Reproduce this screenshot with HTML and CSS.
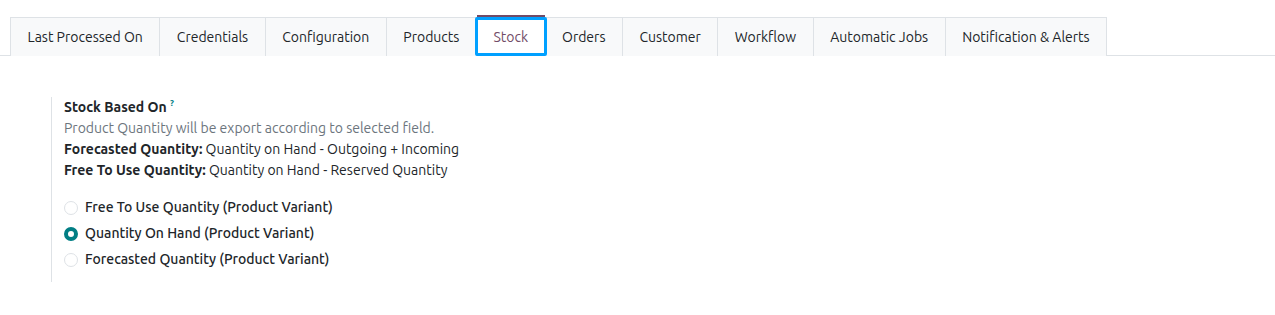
FILE: index.html
```html
<!DOCTYPE html>
<html lang="en">
  <head>
    <meta charset="UTF-8" />
    <meta name="viewport" content="width=device-width, initial-scale=1.0" />
    <title>Stock Settings</title>
    <link rel="stylesheet" href="styles.css">
  </head>
  <body>
    <div class="tabs">
      <a class="tab">Last Processed On</a>
      <a class="tab">Credentials</a>
      <a class="tab">Configuration</a>
      <a class="tab">Products</a>
      <a class="tab active">Stock</a>
      <a class="tab">Orders</a>
      <a class="tab">Customer</a>
      <a class="tab">Workflow</a>
      <a class="tab">Automatic Jobs</a>
      <a class="tab">Notification &amp; Alerts</a>
    </div>

    <div class="panel">
      <div class="setting">
        <div class="label">Stock Based On <sup class="help">?</sup></div>
        <div class="muted">Product Quantity will be export according to selected field.</div>
        <div class="line"><b>Forecasted Quantity:</b> Quantity on Hand - Outgoing + Incoming</div>
        <div class="line"><b>Free To Use Quantity:</b> Quantity on Hand - Reserved Quantity</div>

        <div class="radios">
          <label class="radio"><span class="dot"></span>Free To Use Quantity (Product Variant)</label>
          <label class="radio"><span class="dot checked"></span>Quantity On Hand (Product Variant)</label>
          <label class="radio"><span class="dot"></span>Forecasted Quantity (Product Variant)</label>
        </div>
      </div>
    </div>
  </body>
</html>
```

FILE: styles.css
```css
* {
  box-sizing: border-box;
  margin: 0;
  padding: 0;
}
body {
  font-family: "Ubuntu", "Noto Sans", sans-serif;
  font-size: 14px;
  color: #212529;
  background: #fff;
}
.tabs {
  display: flex;
  margin-top: 17px;
  padding-left: 10px;
  border-bottom: 1px solid #dee2e6;
}
.tab {
  display: flex;
  align-items: center;
  height: 39px;
  padding: 0 16.5px;
  background: #f8f9fa;
  border: 1px solid #dee2e6;
  border-left: none;
  border-bottom: none;
  margin-bottom: -1px;
  color: #212529;
  cursor: pointer;
}
.tab:first-child {
  border-left: 1px solid #dee2e6;
}
.tab.active {
  position: relative;
  background: #fff;
  color: #714b67;
  border-bottom: 1px solid #fff;
}
.tab.active::before {
  content: "";
  position: absolute;
  left: 0;
  right: 0;
  top: -3px;
  height: 3px;
  background: #714b67;
}
.tab.active::after {
  content: "";
  position: absolute;
  inset: -1px -2px -1px -2px;
  border: 3px solid #00a0ff;
  border-radius: 2px;
}
.panel {
  padding: 41px 0 0 51px;
}
.setting {
  border-left: 1px solid #dee2e6;
  padding: 0 0 12px 12px;
  line-height: 21px;
}
.label {
  font-weight: bold;
}
.help {
  color: #017e84;
  font-size: 9px;
  font-weight: bold;
  vertical-align: top;
  position: relative;
  top: -4px;
}
.muted {
  color: #6c757d;
}
.radios {
  margin-top: 16px;
  display: flex;
  flex-direction: column;
  gap: 5px;
}
.radio {
  display: flex;
  align-items: center;
  gap: 7px;
  font-weight: 500;
  color: #212529;
}
.dot {
  width: 14px;
  height: 14px;
  border-radius: 50%;
  border: 1px solid #dee2e6;
  background: #fff;
}
.dot.checked {
  border: 4px solid #017e84;
}
```
